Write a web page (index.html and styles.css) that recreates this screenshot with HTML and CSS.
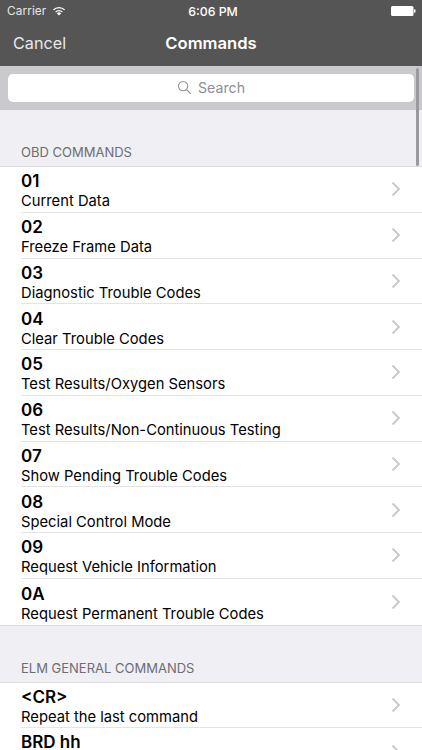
FILE: index.html
```html
<!DOCTYPE html>
<html lang="en">
<head>
<meta charset="utf-8">
<title>Commands</title>
<link rel="stylesheet" href="styles.css">
</head>
<body>
<div class="app">
  <header class="top">
    <div class="status">
      <div class="status-left"><span>Carrier</span>
        <svg class="wifi" viewBox="0 0 14 10" width="14" height="10"><path d="M7 9.6 4.9 7.4a3 3 0 0 1 4.2 0z" fill="#fff"/><path d="M3.6 6.1a4.8 4.8 0 0 1 6.8 0" fill="none" stroke="#fff" stroke-width="1.3"/><path d="M1.4 3.9a7.9 7.9 0 0 1 11.2 0" fill="none" stroke="#fff" stroke-width="1.3"/></svg>
      </div>
      <div class="status-time">6:06 PM</div>
      <div class="status-right">
        <svg viewBox="0 0 25 10" width="25" height="10"><rect x="0" y="0" width="22.5" height="10" rx="1.5" fill="#fff"/><rect x="23" y="3.2" width="1.5" height="3.6" rx=".7" fill="#fff"/></svg>
      </div>
    </div>
    <nav class="nav">
      <span class="cancel">Cancel</span>
      <span class="title">Commands</span>
    </nav>
  </header>
  <div class="searchbar">
    <div class="searchfield">
      <svg viewBox="0 0 16 16" width="15" height="15"><circle cx="6.5" cy="6.5" r="5" fill="none" stroke="#8e8e93" stroke-width="1.1"/><path d="M10.2 10.2 14.6 14.8" stroke="#8e8e93" stroke-width="1.2" fill="none"/></svg>
      <span>Search</span>
    </div>
  </div>
  <div class="scrollthumb"></div>
  <main class="content">
    <h2 class="sec-head first">OBD COMMANDS</h2>
    <ul class="list">
      <li class="row"><div class="text"><b>01</b><span>Current Data</span></div><svg class="chev" viewBox="0 0 10 16" width="10" height="16"><path d="M1.5 1.5 8 8l-6.5 6.5"/></svg></li>
      <li class="row"><div class="text"><b>02</b><span>Freeze Frame Data</span></div><svg class="chev" viewBox="0 0 10 16" width="10" height="16"><path d="M1.5 1.5 8 8l-6.5 6.5"/></svg></li>
      <li class="row"><div class="text"><b>03</b><span>Diagnostic Trouble Codes</span></div><svg class="chev" viewBox="0 0 10 16" width="10" height="16"><path d="M1.5 1.5 8 8l-6.5 6.5"/></svg></li>
      <li class="row"><div class="text"><b>04</b><span>Clear Trouble Codes</span></div><svg class="chev" viewBox="0 0 10 16" width="10" height="16"><path d="M1.5 1.5 8 8l-6.5 6.5"/></svg></li>
      <li class="row"><div class="text"><b>05</b><span>Test Results/Oxygen Sensors</span></div><svg class="chev" viewBox="0 0 10 16" width="10" height="16"><path d="M1.5 1.5 8 8l-6.5 6.5"/></svg></li>
      <li class="row"><div class="text"><b>06</b><span>Test Results/Non-Continuous Testing</span></div><svg class="chev" viewBox="0 0 10 16" width="10" height="16"><path d="M1.5 1.5 8 8l-6.5 6.5"/></svg></li>
      <li class="row"><div class="text"><b>07</b><span>Show Pending Trouble Codes</span></div><svg class="chev" viewBox="0 0 10 16" width="10" height="16"><path d="M1.5 1.5 8 8l-6.5 6.5"/></svg></li>
      <li class="row"><div class="text"><b>08</b><span>Special Control Mode</span></div><svg class="chev" viewBox="0 0 10 16" width="10" height="16"><path d="M1.5 1.5 8 8l-6.5 6.5"/></svg></li>
      <li class="row"><div class="text"><b>09</b><span>Request Vehicle Information</span></div><svg class="chev" viewBox="0 0 10 16" width="10" height="16"><path d="M1.5 1.5 8 8l-6.5 6.5"/></svg></li>
      <li class="row"><div class="text"><b>0A</b><span>Request Permanent Trouble Codes</span></div><svg class="chev" viewBox="0 0 10 16" width="10" height="16"><path d="M1.5 1.5 8 8l-6.5 6.5"/></svg></li>
    </ul>
    <h2 class="sec-head">ELM GENERAL COMMANDS</h2>
    <ul class="list">
      <li class="row"><div class="text"><b>&lt;CR&gt;</b><span>Repeat the last command</span></div><svg class="chev" viewBox="0 0 10 16" width="10" height="16"><path d="M1.5 1.5 8 8l-6.5 6.5"/></svg></li>
      <li class="row clip"><div class="text"><b>BRD hh</b></div><svg class="chev" viewBox="0 0 10 16" width="10" height="16"><path d="M1.5 1.5 8 8l-6.5 6.5"/></svg></li>
    </ul>
  </main>
</div>
</body>
</html>
```
FILE: styles.css
```css
* { box-sizing: border-box; }
html, body { margin: 0; padding: 0; height: 100%; }
body { background: #efeff4; font-family: Inter, "Liberation Sans", sans-serif; overflow: hidden; }
.app { position: relative; width: 422px; height: 750px; overflow: hidden; display: flex; flex-direction: column; }
.top { background: #555555; color: #fff; height: 66px; flex: none; }
.status { height: 21px; display: grid; grid-template-columns: 1fr auto 1fr; align-items: center; padding: 1px 6px 0 7px; font-size: 12.3px; }
.status-left { display: flex; align-items: center; gap: 6px; color: #e6e6e6; font-size: 11.8px; letter-spacing: 0.1px; }
.status-time { font-weight: 500; margin-left: 3px; }
.status-right { display: flex; justify-content: flex-end; }
.wifi { margin-top: -1px; }
.nav { position: relative; height: 45px; display: flex; align-items: center; justify-content: center; padding-bottom: 2px; }
.cancel { position: absolute; left: 13px; top: 12px; font-size: 16.2px; color: #e8e8e8; }
.title { font-size: 16.6px; font-weight: 600; }
.searchbar { background: #c9c9ce; height: 44px; flex: none; padding: 8px; }
.searchfield { height: 28px; background: #fff; border-radius: 5px; display: flex; align-items: center; justify-content: center; gap: 6px; color: #8e8e93; font-size: 14.2px; padding-bottom: 2px; }
.scrollthumb { position: absolute; right: 3px; top: 68px; width: 3px; height: 98px; background: #9a9a9f; border-radius: 2px; }
.content { flex: 1; min-height: 0; }
.sec-head { margin: 0; height: 57px; padding: 0 21px 6px; display: flex; align-items: flex-end; font-size: 13px; font-weight: 400; color: #6d6d72; border-bottom: 1px solid #dcdce0; }
.list { list-style: none; margin: 0; padding: 0; background: #fff; border-bottom: 1px solid #dcdce0; }
.row { height: 45.75px; margin-left: 21px; padding: 3px 21px 0 0; display: flex; align-items: center; justify-content: space-between; border-bottom: 1px solid #e4e4e6; }
.row:last-child { border-bottom: none; }
.row.clip { height: 22px; align-items: flex-start; padding-top: 7px; }
.row.clip b { line-height: 15px; }
.row.clip .chev { margin-top: 8.5px; }
.text { display: flex; flex-direction: column; color: #000; }
.text b { font-size: 17px; font-weight: 600; line-height: 21px; }
.text span { font-size: 14.75px; line-height: 18px; }
.chev { fill: none; stroke: #c7c7cc; stroke-width: 1.8; margin-top: -3px; }
```
